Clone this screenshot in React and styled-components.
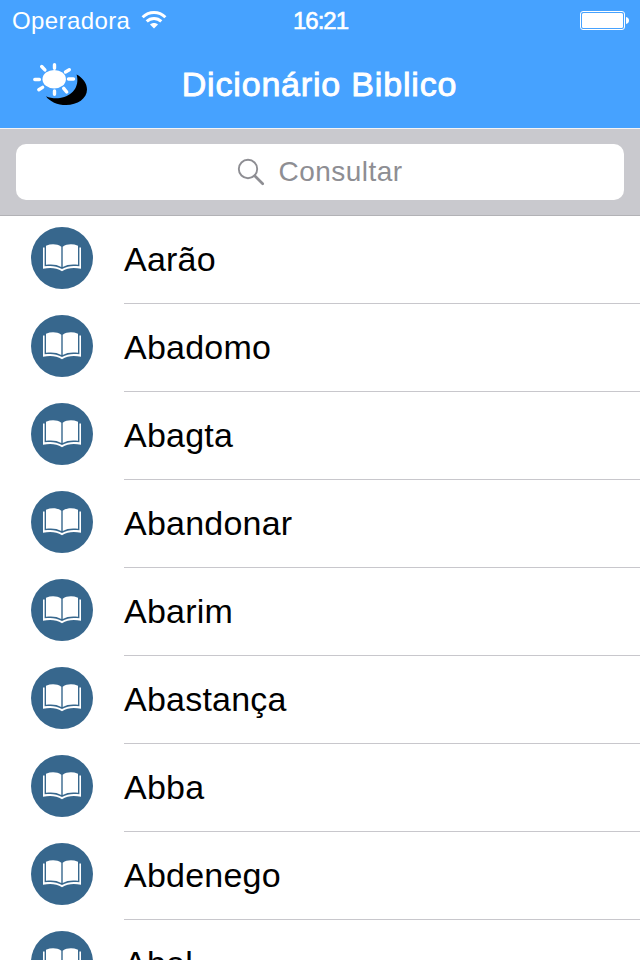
import React from 'react';
import styled, { createGlobalStyle } from 'styled-components';

const GlobalStyle = createGlobalStyle`
    * {
        box-sizing: border-box;
    }

    body {
        margin: 0;
        background: #fff;
        font-family: 'Liberation Sans', Arial, sans-serif;
    }
`;

const Screen = styled.div`
    display: flex;
    flex-direction: column;
    width: 640px;
    height: 960px;
    overflow: hidden;
    background: #fff;
`;

const Header = styled.header`
    flex: none;
    height: 128px;
    background: #46a2ff;
    color: #fff;
`;

const StatusBar = styled.div`
    display: grid;
    grid-template-columns: 1fr auto 1fr;
    align-items: center;
    height: 40px;
    padding: 0 11px 0 12px;
    font-size: 24px;
`;

const Carrier = styled.div`
    display: flex;
    align-items: center;
    gap: 11px;
`;

const CarrierName = styled.span`
    height: 40px;
    line-height: 42px;
    letter-spacing: 0.4px;
`;

const Time = styled.div`
    height: 40px;
    line-height: 42px;
    letter-spacing: -1px;
    -webkit-text-stroke: 0.6px #fff;
`;

const Battery = styled.svg`
    justify-self: end;
`;

const NavBar = styled.div`
    display: grid;
    grid-template-columns: 148px 1fr 148px;
    align-items: center;
    height: 88px;
`;

const ThemeButton = styled.button`
    display: flex;
    justify-self: start;
    margin: 3px 0 0 30px;
    padding: 0;
    border: 0;
    background: none;
`;

const Title = styled.h1`
    margin: 0 1px 0 0;
    font-size: 34px;
    font-weight: 400;
    line-height: 88px;
    letter-spacing: 0.82px;
    text-align: center;
    white-space: nowrap;
    -webkit-text-stroke: 0.9px #fff;
`;

const SearchBar = styled.div`
    flex: none;
    height: 88px;
    padding: 15px 16px;
    border-top: 1px solid #f4f4f6;
    border-bottom: 1px solid #b2b2b6;
    background: #c9c9ce;
`;

const SearchField = styled.div`
    display: flex;
    align-items: center;
    justify-content: center;
    gap: 14px;
    height: 56px;
    padding-right: 1px;
    border-radius: 10px;
    background: #fff;
    color: #8e8e93;
    font-size: 28px;
    letter-spacing: 0.45px;
`;

const List = styled.ul`
    margin: 0;
    padding: 0;
    list-style: none;
`;

const Row = styled.li`
    display: flex;
    height: 88px;
    padding-left: 30px;
`;

const RowIcon = styled.svg`
    flex: none;
    margin: 10px 30px 0 0;
`;

const Word = styled.span`
    flex: 1;
    border-bottom: 1px solid #c8c7cc;
    color: #000;
    font-size: 34px;
    line-height: 87px;
    letter-spacing: 0.22px;
`;

const words = [
    'Aarão',
    'Abadomo',
    'Abagta',
    'Abandonar',
    'Abarim',
    'Abastança',
    'Abba',
    'Abdenego',
    'Abel',
];

const WifiIcon = () => (
    <svg width="26" height="20" viewBox="0 0 26 20">
        <g fill="none" stroke="#fff" strokeWidth="3">
            <path d="M1.6 7.2C8 .9 18 .9 24.4 7.2" />
            <path d="M5.7 11.4C9.8 7.4 16.2 7.4 20.3 11.4" />
        </g>
        <path fill="#fff" d="M9 14.4c2.3-2 5.7-2 8 0l-4 4.1z" />
    </svg>
);

const DayNightIcon = () => (
    <svg width="60" height="48" viewBox="0 0 60 48">
        <path
            fill="#000"
            d="M46.6 12.6C53 16 57 21.5 57 27.5C57 36.5 47.5 43 36 43C27.5 43 19.5 39.5 16 34.2C20 36 25 36.6 30 36C42 34.5 50 25 46.6 12.6Z"
        />
        <ellipse cx="24.2" cy="17.2" rx="11.7" ry="9.3" fill="#fff" />
        <g stroke="#fff" strokeWidth="3.4" strokeLinecap="round">
            <path d="M24.5 2.7v3.6M24.5 29v3.2M4.8 17.5h4.6M38.5 17h5M11.7 4.5l3.2 3.4M35.5 10l3.8-2.300M8.8 27.7l3.8-2.3M33.7 26.4l3 3.6" />
        </g>
    </svg>
);

const SearchIcon = () => (
    <svg width="28" height="28" viewBox="0 0 28 28">
        <g fill="none" stroke="#8e8e93">
            <circle cx="11" cy="11" r="9.2" strokeWidth="1.9" />
            <path d="M17.7 17.7l8 8" strokeWidth="2.7" strokeLinecap="round" />
        </g>
    </svg>
);

const BookIcon = () => (
    <RowIcon width="64" height="64" viewBox="0 0 64 64">
        <circle cx="32" cy="32" r="31" fill="#37678d" />
        <path
            fill="#fff"
            d="M13 21.5h1.6V40.3c6.5-.9 12-.5 17.4 2.7c5.4-3.200 10.9-3.6 17.4-2.7V21.5H51V42.7c-7.5-1.2-13.5-.9-19 2.5c-5.5-3.4-11.5-3.7-19-2.5Z"
        />
        <path
            fill="#fff"
            d="M16 19.7c5.5-2.1 11-1.9 15.300 1V40.9c-4.300-2.400-9.500-3-15.300-2.100ZM48 19.7c-5.5-2.1-11-1.9-15.3 1V40.9c4.3-2.4 9.5-3 15.3-2.1Z"
        />
    </RowIcon>
);

export default function App() {
    return (
        <>
            <GlobalStyle />
            <Screen>
                <Header>
                    <StatusBar>
                        <Carrier>
                            <CarrierName>Operadora</CarrierName>
                            <WifiIcon />
                        </Carrier>
                        <Time>16:21</Time>
                        <Battery width="50" height="20" viewBox="0 0 50 20">
                            <rect x="1.5" y="1.5" width="44" height="18" rx="2.5" fill="none" stroke="#fff" />
                            <rect x="3" y="3" width="41" height="15" rx="1.5" fill="#fff" />
                            <path fill="#fff" d="M47 7c2 .6 3 1.7 3 3.5s-1 2.9-3 3.5z" />
                        </Battery>
                    </StatusBar>
                    <NavBar>
                        <ThemeButton>
                            <DayNightIcon />
                        </ThemeButton>
                        <Title>Dicionário Biblico</Title>
                    </NavBar>
                </Header>
                <SearchBar>
                    <SearchField>
                        <SearchIcon />
                        Consultar
                    </SearchField>
                </SearchBar>
                <List>
                    {words.map((word) => (
                        <Row key={word}>
                            <BookIcon />
                            <Word>{word}</Word>
                        </Row>
                    ))}
                </List>
            </Screen>
        </>
    );
}
